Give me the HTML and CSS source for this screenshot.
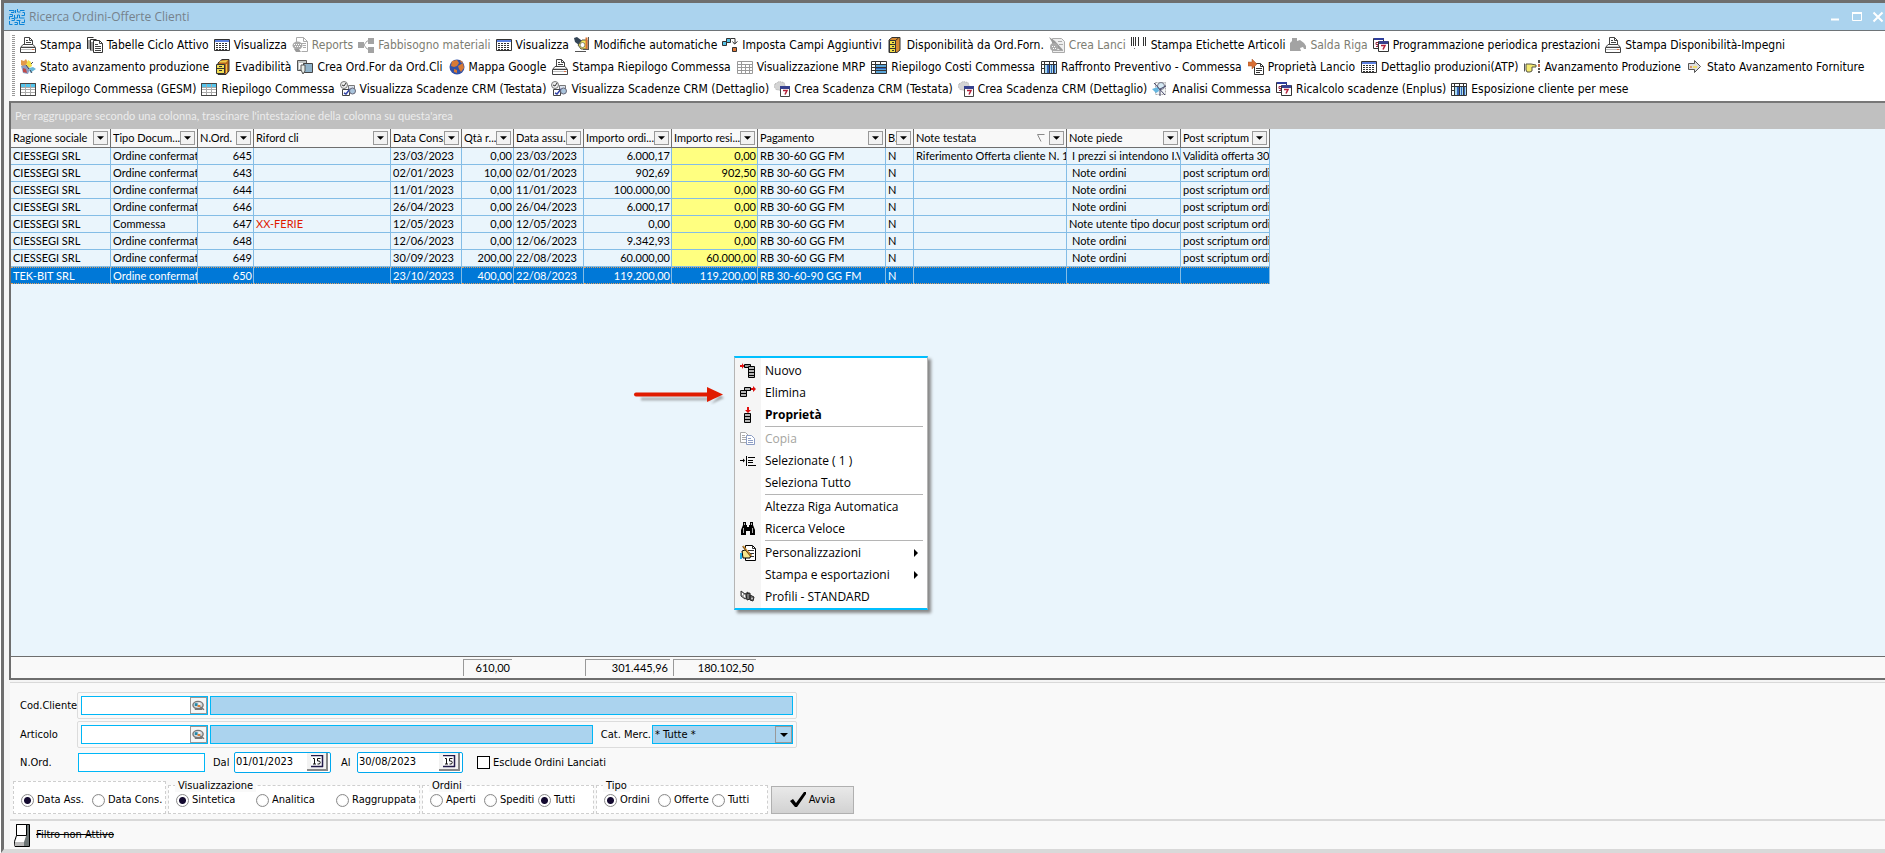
FILE: index.html
```html
<!DOCTYPE html>
<html lang="it">
<head>
<meta charset="utf-8">
<title>Ricerca Ordini-Offerte Clienti</title>
<link rel="stylesheet" href="styles.css">
</head>
<body>
<svg class="defs" aria-hidden="true">
  <symbol id="printer" viewBox="0 0 16 16">
    <path d="M4.500 7V.5h5l3 3V7" fill="#fff" stroke="#444"/><path d="M9.500.5v3h3M6 3.500h2M6 5.500h5" fill="none" stroke="#444"/>
    <path d="M3 7.500h10l2.500 3v5H.5v-5z" fill="#fff" stroke="#444"/><path d="M1 10.500h14" stroke="#444"/><path d="M1 12.500h14" stroke="#bbb"/><path d="M2 9.500h12" stroke="#ccc"/><path d="M12 12h2v1h-2z" fill="#e06a3c"/>
  </symbol>
  <symbol id="docs" viewBox="0 0 16 16">
    <path d="M.5 12V.5h6M3.500 13.500v-11h6" fill="none" stroke="#333"/><path d="M6.500 15.500v-12h6l3 3v9z" fill="#fff" stroke="#333"/><path d="M12.500 3.500v3h3M8 7.500h3M8 9.500h6M8 11.500h6M8 13.500h6M2 3v9M5 5v9" fill="none" stroke="#444"/>
  </symbol>
  <symbol id="list" viewBox="0 0 16 16">
    <path d="M.5 2.500h15v11H.5z" fill="#fff" stroke="#333"/><path d="M1 3h14v2H1z" fill="#5b7fe0"/><path d="M2 6.500h12M2 8.500h12M2 10.500h12M2 12.500h12" stroke="#333" stroke-dasharray="2 1"/>
  </symbol>
  <symbol id="reports" viewBox="0 0 16 16">
    <path d="M4.500 5V.5h7l4 4v10h-6" fill="#fff" stroke="#aaa"/><path d="M11.500.5v4h4M9 6.500h5M11 8.500h3M11 10.500h3" fill="none" stroke="#aaa"/><ellipse cx="5.500" cy="8.500" rx="5" ry="4" fill="#aaa"/><path d="M2 12h5l2 3H4z" fill="#999"/><path d="M2 7.500h7M3 9.500h6" stroke="#fff" stroke-dasharray="1 1"/>
  </symbol>
  <symbol id="tree" viewBox="0 0 16 16">
    <path d="M0 5h6v6H0zM10 1h6v6h-6zM10 10h6v6h-6z" fill="#a3a3a3"/><path d="M11 4H9L6 8l3 4h2" fill="none" stroke="#a3a3a3"/>
  </symbol>
  <symbol id="autoedit" viewBox="0 0 16 16">
    <path d="M0 1l3-1 4 3v4L5 8 1 5z" fill="#345"/><path d="M4 8l4-5h5v9H7z" fill="#f6ea5a" stroke="#554"/><circle cx="8.500" cy="8" r="2.500" fill="#fff" stroke="#886"/><path d="M12.500.5v12" stroke="#d8702c" stroke-width="2"/><path d="M14.500 0v12M9 12.500h6M1 14.500h11" stroke="#555"/>
  </symbol>
  <symbol id="fields" viewBox="0 0 16 16">
    <path d="M4.500 1.500h4v4h-4zM.5 4.500h4v4h-4z" fill="#57c4e8" stroke="#333"/><path d="M9 1.500h4V7M10.500 4.500l2 2.500 3-2.500" fill="none" stroke="#333"/><path d="M10.500 10.500h4v4h-4z" fill="#e07838" stroke="#333"/>
  </symbol>
  <symbol id="cabinet" viewBox="0 0 16 16">
    <path d="M2 3l3-2.500h8V13l-3 2.500H2z" fill="#d88b32" stroke="#333"/><path d="M2.500 3.500h6v12h-6z" fill="#f3df45" stroke="#333"/><path d="M3 7.500h5M3 11.500h5M5 5.500h2M5 9.500h2M5 13.500h2" stroke="#333"/><path d="M8.500 3.500l3-2.500" stroke="#333"/>
  </symbol>
  <symbol id="launch" viewBox="0 0 16 16">
    <path d="M3.500 1.500h9l3 3v11h-12z" fill="#eee" stroke="#aaa"/><path d="M0 0l6 4 8 9-2 1-8-7z" fill="#999"/><circle cx="5" cy="10" r="4" fill="#aaa"/><path d="M9 4.500h4M10 7.500h4M6 13.500h8" stroke="#aaa"/><path d="M3 9.500h4M4 11.500h3" stroke="#fff" stroke-dasharray="1 1"/>
  </symbol>
  <symbol id="barcode" viewBox="0 0 16 16">
    <path d="M.5 0v9M2.500 0v9M4.500 0v9M7.500 0v9M12.500 0v9M14.500 0v9" stroke="#333"/><path d="M3 11h1v1H3z" fill="#777"/>
  </symbol>
  <symbol id="settle" viewBox="0 0 16 16">
    <path d="M0 14V6l2-2V1h5v3l3-1 4 3 2 3v3h-2l-1-2-3 1 1 3z" fill="#a3a3a3"/>
  </symbol>
  <symbol id="calendars" viewBox="0 0 16 16">
    <path d="M.5 1.500h10v10H.5z" fill="#fff" stroke="#333"/><path d="M1 1h10v2H1z" fill="#2f3e9c"/><path d="M5 5.500H3v2h2v2H3" fill="none" stroke="#98243c"/><path d="M5.500 4.500h10v10h-10z" fill="#fff" stroke="#333"/><path d="M6 4h9v3H6z" fill="#39418f"/><path d="M8 8.500h4l-2 4" fill="none" stroke="#b3203a" stroke-width="1.500"/>
  </symbol>
  <symbol id="gears" viewBox="0 0 16 16">
    <path d="M1 1l3 1 2-2 2 4-4 4-3-2z" fill="#e39a4b"/><path d="M8 1l3 2 1 4-3 2-3-3z" fill="#f3df45"/><path d="M1 7l5-1 4 4-2 5-5-1z" fill="#8d9fc4"/><path d="M3 9l3 1 1 4-4-1z" fill="#c04a4a"/><path d="M9 9l4-1 3 2-3 2-3 2z" fill="#6ab8d8"/><path d="M11 5l2-2M10 11l2 3M6 6l3 4" stroke="#445"/>
  </symbol>
  <symbol id="box" viewBox="0 0 16 16">
    <path d="M3 4l4-3.500h7V12l-3 3.500H3z" fill="#b8651f" stroke="#333"/><path d="M5 2l8-1-2 2.500H4z" fill="#f0cf4a"/><path d="M1.500 5.500h8v9h-8z" fill="#f3df55" stroke="#333"/><path d="M2 9.500h7M4 7.500h3M4 11.500h3" stroke="#333"/><path d="M11.500 5v9" stroke="#f0cf4a"/>
  </symbol>
  <symbol id="orders" viewBox="0 0 16 16">
    <path d="M.5 1.500h9v10h-9z" fill="#bfc4c4" stroke="#555"/><path d="M2 4h4v6H2z" fill="#fff"/><path d="M6.500 4.500h9v9h-9z" fill="#8fb2c9" stroke="#444"/><path d="M4 6h4v6l-2 3-2-4z" fill="#e8ede8" stroke="#555"/>
  </symbol>
  <symbol id="globe" viewBox="0 0 16 16">
    <circle cx="8" cy="8" r="7.500" fill="#3252a8"/><path d="M3 2l5-1 2 3-2 3-3 1-3-1zM9 7l5-3 1 5-3 4-2-3zM5 10l3 1v3l-3-1zM11 1l3 2-2 1z" fill="#d87a34"/>
  </symbol>
  <symbol id="mrp" viewBox="0 0 16 16">
    <path d="M.5 2.500h15v12H.5zM1 5.500h14M1 8.500h14M1 11.500h14M4.500 3v11M8.500 5v9M12.500 5v9" fill="#fff" stroke="#999"/>
  </symbol>
  <symbol id="rows" viewBox="0 0 16 16">
    <path d="M.5 2.500h15v12H.5z" fill="#fff" stroke="#333"/><path d="M5 6h10v8H5z" fill="#59a5d8"/><path d="M1 5.500h14M1 8.500h14M1 11.500h14M4.500 3v11M9.500 3v2" stroke="#333"/><path d="M5 9.500h10" stroke="#2f5fc0"/>
  </symbol>
  <symbol id="cols" viewBox="0 0 16 16">
    <path d="M.5 2.500h15v12H.5z" fill="#fff" stroke="#333"/><path d="M4 6h11v8H4z" fill="#a7dcf2"/><path d="M6 6h2v8H6zM10 6h1v8h-1zM13 6h1v8h-1z" fill="#3764b8"/><path d="M1 5.500h14M3.500 3v11M8.500 3v11M12.500 3v11M1 9.500h3" stroke="#333"/>
  </symbol>
  <symbol id="launchprop" viewBox="0 0 16 16">
    <path d="M6.500 4.500h6l3 3v8h-9z" fill="#fff" stroke="#333"/><path d="M8 9.500h6M8 11.500h6M8 13.500h4M12.500 4.500v3h3" fill="none" stroke="#333"/><path d="M0 3h4V0l5 5-5 5V7H0z" fill="#d86f35" stroke="#a5552a" stroke-width=".5"/>
  </symbol>
  <symbol id="hand" viewBox="0 0 16 16">
    <path d="M.5 4.500v8" stroke="#555"/><path d="M2 5h5l5 1v2H8v4l-2 1H3L2 11z" fill="#f4ea72" stroke="#554"/><path d="M14 1h2v3h-2zM14 9h2v2h-2zM14 12h2v2h-2z" fill="#555"/><path d="M14 5h2v3h-2z" fill="#c46a4a"/>
  </symbol>
  <symbol id="arrow" viewBox="0 0 16 16">
    <path d="M1.500 4.500h6v-3l6 6-6 6v-3h-6z" fill="#ddd" stroke="#555"/><path d="M3 7h2v2H3z" fill="#e09a6a"/><path d="M6 7h4v2H6z" fill="#f2e06a"/>
  </symbol>
  <symbol id="sheet" viewBox="0 0 16 16">
    <path d="M.5 2.500h15v12H.5z" fill="#fff" stroke="#444"/><path d="M1 3h14v3H1z" fill="#54c4ec"/><path d="M5.500 3v11M10.500 3v11M1 6.500h14M1 8.500h14M1 11.500h14" stroke="#aaa"/><path d="M.5 2.500h15v12H.5z" fill="none" stroke="#444"/>
  </symbol>
  <symbol id="crmview" viewBox="0 0 16 16">
    <circle cx="4" cy="4" r="3.500" fill="#eee" stroke="#777"/><path d="M2 4l2 1 2-3" fill="none" stroke="#333"/><path d="M8.500 4.500h6v5h-6z" fill="#dde4ee" stroke="#777"/><path d="M2.500 8.500h7v6h-7z" fill="#fff" stroke="#444"/><path d="M4 12l2 1 4-5" fill="none" stroke="#3344a8" stroke-width="1.500"/><circle cx="12.500" cy="10" r="3" fill="#a9c4dc" stroke="#667"/>
  </symbol>
  <symbol id="crmnew" viewBox="0 0 16 16">
    <path d="M1 3l4-2.500 5 1 1 3-4 5-5-1-2-3z" fill="#d4d4d4" stroke="#aaa" stroke-dasharray="1 1"/><path d="M6.500 5.500h9v10h-9z" fill="#fff" stroke="#444"/><path d="M6 5h10v3H6z" fill="#36418f"/><path d="M9 9.500h4l-2 4" fill="none" stroke="#b3203a" stroke-width="1.500"/>
  </symbol>
  <symbol id="analysis" viewBox="0 0 16 16">
    <path d="M3.500 1.500h10v12h-10z" fill="#f2f5f7" stroke="#aaa" stroke-dasharray="2 1"/><circle cx="9" cy="5" r="3.500" fill="#d5eaf4" stroke="#778"/><path d="M0 8l6-2 1 4-3 2z" fill="#67b7e0"/><path d="M2 2l11 12M8 8l6-3M8 8v7" stroke="#446"/>
  </symbol>
  <symbol id="m-new" viewBox="0 0 16 16">
    <path d="M0 2h4v2H0zM2 0l2 3-2 3z" fill="#e01010"/><path d="M4.500 1.500h6v3h-6z" fill="#999" stroke="#000"/><path d="M8.500 3.500h6v11h-6z" fill="#b5b5b5" stroke="#000"/><path d="M9 6.500h5M9 9.500h5M9 12.500h5" stroke="#000"/>
  </symbol>
  <symbol id="m-del" viewBox="0 0 16 16">
    <path d="M4.500 2.500h6v3h-6zM.5 5.500h6v3h-6zM.5 8.500h6v3h-6z" fill="#b5b5b5" stroke="#000"/><path d="M11 3h3v2h-3zM13 1l3 3-3 3z" fill="#e01010"/>
  </symbol>
  <symbol id="m-prop" viewBox="0 0 16 16">
    <path d="M7 0h2v3h2L8 6 5 3h2z" fill="#e01010"/><path d="M4.500 6.500h6v9h-6z" fill="#b5b5b5" stroke="#000"/><path d="M5 9.500h6M5 12.500h6" stroke="#000"/>
  </symbol>
  <symbol id="m-copy" viewBox="0 0 16 16">
    <path d="M.5 1.500h5l3 3v7h-8z" fill="#fff" stroke="#aaa"/><path d="M2 4.500h3M2 6.500h4M2 8.500h4" stroke="#aaa"/><path d="M6.500 4.500h5l3 3v6h-8z" fill="#fff" stroke="#8c9dc4"/><path d="M8 7.500h3M8 9.500h5M8 11.500h5" stroke="#8c9dc4"/>
  </symbol>
  <symbol id="m-sel" viewBox="0 0 16 16">
    <path d="M0 7.500h4M6.500 3v10M8 4.500h7M8 7.500h5M8 9.500h5M8 12.500h8" stroke="#000" fill="none"/><path d="M3 5.500l2 2-2 2z"/>
  </symbol>
  <symbol id="m-find" viewBox="0 0 16 16">
    <path d="M3 1h3v3h1v2h2V4h1V1h3v3l2 5v5h-5v-4H6v4H1V9l2-5z"/><path d="M3.500 7v5M12.500 7v5M4.500 2v2M11.500 2v2" stroke="#fff" stroke-width=".7"/>
  </symbol>
  <symbol id="m-pers" viewBox="0 0 16 16">
    <path d="M5.500.5h7l3 3v12h-10z" fill="#fff" stroke="#000"/><path d="M12.500.5v3h3M8 5.500h6M11 8.500h3M11 11.500h3" fill="none" stroke="#333"/><path d="M2 6l3-1 6 4-1 4H3z" fill="#f7e78c" stroke="#000"/><path d="M0 8h2v6H0z" fill="#20b0e8"/><path d="M3 1l8 10" stroke="#c88a2a" stroke-width="2"/><path d="M2.500 1.500L11 12" stroke="#000" stroke-width=".5"/>
  </symbol>
  <symbol id="m-prof" viewBox="0 0 16 16">
    <path d="M1 2l4 3 3-2v5l-3 2-4-3z" fill="#aaa" stroke="#333"/><path d="M6 5l4-1v6l-3 1zM10 6l4 2-1 4-3-1z" fill="#777" stroke="#222"/><path d="M2.500 4v2M4.500 6v2M12 9v1" stroke="#fff"/>
  </symbol>
  <symbol id="lens" viewBox="0 0 14 12">
    <ellipse cx="6.500" cy="5" rx="5.500" ry="4" fill="#d5dade" stroke="#777" stroke-width="1.500"/><path d="M3 9.500h8M9 7l4 3" stroke="#777" stroke-width="1.500"/><path d="M3 3h3v3H3z" fill="#28a"/><path d="M6 5h3v2H6z" fill="#d97a2a"/><path d="M7 2.500h2v2H7z" fill="#fff"/>
  </symbol>
  <symbol id="cal15" viewBox="0 0 14 13">
    <path d="M1 1h11v10H1z" fill="#fff"/><path d="M1 .5h12M12.500 0v12M1 11.500h12" stroke="#221a4a" stroke-width="1.500" fill="none"/><path d="M3 3.500h1.500V9M3 9h3M10.500 3.500H7.500V6h2q1.500 1.500 0 3h-2" fill="none" stroke="#111"/>
  </symbol>
  <symbol id="down" viewBox="0 0 8 4"><path d="M0 0h8L4 4z"/></symbol>
</svg>

<div class="window">
  <header class="titlebar">
    <svg class="logo" viewBox="0 0 16 16"><path d="M0 1.500h5v2H2M8.500 0v3h3M6.500 1v3M11 1.500h4.500M13.500 3.500h2v3h-3M.5 5.500h3v2h-3v3M5.500 6v3h3V6h2v3h5M2.500 9.500h3v2h-3M.5 12v3.500h3M5.500 13.500h3v2h-3M7.500 11.500h4M10.500 12v3.500h5M12.500 13.500h3v-3" fill="none" stroke="#0a84d8"/></svg>
    <h1 class="title">Ricerca Ordini-Offerte Clienti</h1>
    <div class="winbtns">
      <button type="button" aria-label="Riduci"><svg viewBox="0 0 12 12"><path d="M1 8.500h8" stroke="#fff" stroke-width="2"/></svg></button>
      <button type="button" aria-label="Ingrandisci"><svg viewBox="0 0 12 12"><path d="M1.500 1.500h9v8h-9z" fill="none" stroke="#fff"/><path d="M1 2h10" stroke="#fff" stroke-width="2"/></svg></button>
      <button type="button" aria-label="Chiudi"><svg viewBox="0 0 12 12"><path d="M1.500 1.500l9 9M10.500 1.500l-9 9" stroke="#fff" stroke-width="2"/></svg></button>
    </div>
  </header>

  <nav class="toolbar">
    <span class="grip"></span>
    <div class="toolrows">
      <div class="toolrow">
        <button type="button"><svg><use href="#printer"/></svg>Stampa</button>
        <button type="button"><svg><use href="#docs"/></svg>Tabelle Ciclo Attivo</button>
        <button type="button"><svg><use href="#list"/></svg>Visualizza</button>
        <button type="button" disabled><svg><use href="#reports"/></svg>Reports</button>
        <button type="button" disabled><svg><use href="#tree"/></svg>Fabbisogno materiali</button>
        <button type="button"><svg><use href="#list"/></svg>Visualizza</button>
        <button type="button"><svg><use href="#autoedit"/></svg>Modifiche automatiche</button>
        <button type="button"><svg><use href="#fields"/></svg>Imposta Campi Aggiuntivi</button>
        <button type="button"><svg><use href="#cabinet"/></svg>Disponibilità da Ord.Forn.</button>
        <button type="button" disabled><svg><use href="#launch"/></svg>Crea Lanci</button>
        <button type="button"><svg><use href="#barcode"/></svg>Stampa Etichette Articoli</button>
        <button type="button" disabled><svg><use href="#settle"/></svg>Salda Riga</button>
        <button type="button"><svg><use href="#calendars"/></svg>Programmazione periodica prestazioni</button>
        <button type="button"><svg><use href="#printer"/></svg>Stampa Disponibilità-Impegni</button>
      </div>
      <div class="toolrow loose">
        <button type="button"><svg><use href="#gears"/></svg>Stato avanzamento produzione</button>
        <button type="button"><svg><use href="#box"/></svg>Evadibilità</button>
        <button type="button"><svg><use href="#orders"/></svg>Crea Ord.For da Ord.Cli</button>
        <button type="button"><svg><use href="#globe"/></svg>Mappa Google</button>
        <button type="button"><svg><use href="#printer"/></svg>Stampa Riepilogo Commessa</button>
        <button type="button"><svg><use href="#mrp"/></svg>Visualizzazione MRP</button>
        <button type="button"><svg><use href="#rows"/></svg>Riepilogo Costi Commessa</button>
        <button type="button"><svg><use href="#cols"/></svg>Raffronto Preventivo - Commessa</button>
        <button type="button"><svg><use href="#launchprop"/></svg>Proprietà Lancio</button>
        <button type="button"><svg><use href="#list"/></svg>Dettaglio produzioni(ATP)</button>
        <button type="button"><svg><use href="#hand"/></svg>Avanzamento Produzione</button>
        <button type="button"><svg><use href="#arrow"/></svg>Stato Avanzamento Forniture</button>
      </div>
      <div class="toolrow">
        <button type="button"><svg><use href="#sheet"/></svg>Riepilogo Commessa (GESM)</button>
        <button type="button"><svg><use href="#sheet"/></svg>Riepilogo Commessa</button>
        <button type="button"><svg><use href="#crmview"/></svg>Visualizza Scadenze CRM (Testata)</button>
        <button type="button"><svg><use href="#crmview"/></svg>Visualizza Scadenze CRM (Dettaglio)</button>
        <button type="button"><svg><use href="#crmnew"/></svg>Crea Scadenza CRM (Testata)</button>
        <button type="button"><svg><use href="#crmnew"/></svg>Crea Scadenza CRM (Dettaglio)</button>
        <button type="button"><svg><use href="#analysis"/></svg>Analisi Commessa</button>
        <button type="button"><svg><use href="#calendars"/></svg>Ricalcolo scadenze (Enplus)</button>
        <button type="button"><svg><use href="#cols"/></svg>Esposizione cliente per mese</button>
      </div>
    </div>
  </nav>

  <main class="grid">
    <div class="groupbar">Per raggruppare secondo una colonna, trascinare l'intestazione della colonna su questa'area</div>
    <div class="gridbody">
      <table class="orders">
        <colgroup><col class="w100"><col class="w87"><col class="w56"><col class="w137"><col class="w71"><col class="w52"><col class="w70"><col class="w88"><col class="w86"><col class="w128"><col class="w28"><col class="w153"><col class="w114"><col class="w89"></colgroup>
        <thead><tr>
          <th><div><span>Ragione sociale</span><button type="button" aria-label="Filtra"><svg><use href="#down"/></svg></button></div></th>
          <th><div><span>Tipo Docum...</span><button type="button" aria-label="Filtra"><svg><use href="#down"/></svg></button></div></th>
          <th><div><span>N.Ord.</span><button type="button" aria-label="Filtra"><svg><use href="#down"/></svg></button></div></th>
          <th><div><span>Riford cli</span><button type="button" aria-label="Filtra"><svg><use href="#down"/></svg></button></div></th>
          <th><div><span>Data Cons.</span><button type="button" aria-label="Filtra"><svg><use href="#down"/></svg></button></div></th>
          <th><div><span>Qtà r...</span><button type="button" aria-label="Filtra"><svg><use href="#down"/></svg></button></div></th>
          <th><div><span>Data assu...</span><button type="button" aria-label="Filtra"><svg><use href="#down"/></svg></button></div></th>
          <th><div><span>Importo ordi...</span><button type="button" aria-label="Filtra"><svg><use href="#down"/></svg></button></div></th>
          <th><div><span>Importo resi...</span><button type="button" aria-label="Filtra"><svg><use href="#down"/></svg></button></div></th>
          <th><div><span>Pagamento</span><button type="button" aria-label="Filtra"><svg><use href="#down"/></svg></button></div></th>
          <th><div><span>B.</span><button type="button" aria-label="Filtra"><svg><use href="#down"/></svg></button></div></th>
          <th><div><span>Note testata</span><svg class="sort" viewBox="0 0 8 8"><path d="M7.500.5h-7L4 7.500" fill="none" stroke="#888"/></svg><button type="button" aria-label="Filtra"><svg><use href="#down"/></svg></button></div></th>
          <th><div><span>Note piede</span><button type="button" aria-label="Filtra"><svg><use href="#down"/></svg></button></div></th>
          <th><div><span>Post scriptum ...</span><button type="button" aria-label="Filtra"><svg><use href="#down"/></svg></button></div></th>
        </tr></thead>
        <tbody>
          <tr><td>CIESSEGI SRL</td><td>Ordine confermato</td><td class="num">645</td><td></td><td>23/03/2023</td><td class="num">0,00</td><td>23/03/2023</td><td class="num">6.000,17</td><td class="num due">0,00</td><td>RB 30-60 GG FM</td><td>N</td><td>Riferimento Offerta cliente N. 137</td><td class="ind">I prezzi si intendono I.V.A.</td><td>Validità offerta 30 giorni</td></tr>
          <tr><td>CIESSEGI SRL</td><td>Ordine confermato</td><td class="num">643</td><td></td><td>02/01/2023</td><td class="num">10,00</td><td>02/01/2023</td><td class="num">902,69</td><td class="num due">902,50</td><td>RB 30-60 GG FM</td><td>N</td><td></td><td class="ind">Note ordini</td><td>post scriptum ordini</td></tr>
          <tr><td>CIESSEGI SRL</td><td>Ordine confermato</td><td class="num">644</td><td></td><td>11/01/2023</td><td class="num">0,00</td><td>11/01/2023</td><td class="num">100.000,00</td><td class="num due">0,00</td><td>RB 30-60 GG FM</td><td>N</td><td></td><td class="ind">Note ordini</td><td>post scriptum ordini</td></tr>
          <tr><td>CIESSEGI SRL</td><td>Ordine confermato</td><td class="num">646</td><td></td><td>26/04/2023</td><td class="num">0,00</td><td>26/04/2023</td><td class="num">6.000,17</td><td class="num due">0,00</td><td>RB 30-60 GG FM</td><td>N</td><td></td><td class="ind">Note ordini</td><td>post scriptum ordini</td></tr>
          <tr><td>CIESSEGI SRL</td><td>Commessa</td><td class="num">647</td><td class="alert">XX-FERIE</td><td>12/05/2023</td><td class="num">0,00</td><td>12/05/2023</td><td class="num">0,00</td><td class="num due">0,00</td><td>RB 30-60 GG FM</td><td>N</td><td></td><td>Note utente tipo documento</td><td>post scriptum ordini</td></tr>
          <tr><td>CIESSEGI SRL</td><td>Ordine confermato</td><td class="num">648</td><td></td><td>12/06/2023</td><td class="num">0,00</td><td>12/06/2023</td><td class="num">9.342,93</td><td class="num due">0,00</td><td>RB 30-60 GG FM</td><td>N</td><td></td><td class="ind">Note ordini</td><td>post scriptum ordini</td></tr>
          <tr><td>CIESSEGI SRL</td><td>Ordine confermato</td><td class="num">649</td><td></td><td>30/09/2023</td><td class="num">200,00</td><td>22/08/2023</td><td class="num">60.000,00</td><td class="num due">60.000,00</td><td>RB 30-60 GG FM</td><td>N</td><td></td><td class="ind">Note ordini</td><td>post scriptum ordini</td></tr>
          <tr class="selected"><td>TEK-BIT SRL</td><td>Ordine confermato</td><td class="num">650</td><td></td><td>23/10/2023</td><td class="num">400,00</td><td>22/08/2023</td><td class="num">119.200,00</td><td class="num">119.200,00</td><td>RB 30-60-90 GG FM</td><td>N</td><td></td><td></td><td></td></tr>
        </tbody>
      </table>
    </div>
    <div class="totals">
      <output class="total qty">610,00</output>
      <output class="total amount">301.445,96</output>
      <output class="total rest">180.102,50</output>
    </div>
  </main>

  <form class="filters">
    <div class="frow">
      <label for="cli">Cod.Cliente</label>
      <div class="fbox">
        <div class="lookup"><input id="cli" type="text"><button type="button" aria-label="Cerca cliente"><svg><use href="#lens"/></svg></button></div>
        <input class="desc wide" type="text" readonly aria-label="Descrizione cliente">
      </div>
    </div>
    <div class="frow">
      <label for="art">Articolo</label>
      <div class="fbox">
        <div class="lookup"><input id="art" type="text"><button type="button" aria-label="Cerca articolo"><svg><use href="#lens"/></svg></button></div>
        <input class="desc" type="text" readonly aria-label="Descrizione articolo">
        <label class="cat" for="cat">Cat. Merc.</label>
        <div class="combo"><select id="cat"><option>* Tutte *</option></select><span class="comboarrow"><svg><use href="#down"/></svg></span></div>
      </div>
    </div>
    <div class="frow dates">
      <label for="nord">N.Ord.</label>
      <input class="nord" id="nord" type="text">
      <label class="dal" for="dal">Dal</label>
      <div class="date"><input id="dal" type="text" value="01/01/2023"><button type="button" aria-label="Calendario"><svg><use href="#cal15"/></svg></button></div>
      <label class="al" for="al">Al</label>
      <div class="date long"><input id="al" type="text" value="30/08/2023"><button type="button" aria-label="Calendario"><svg><use href="#cal15"/></svg></button></div>
      <label class="check"><input type="checkbox">Esclude Ordini Lanciati</label>
    </div>
    <div class="options">
      <div class="opt data" role="group" aria-label="Data">
        <label class="g71"><input type="radio" name="data" checked>Data Ass.</label>
        <label><input type="radio" name="data">Data Cons.</label>
      </div>
      <div class="opt vis" role="group" aria-labelledby="l-vis">
        <span class="legend" id="l-vis">Visualizzazione</span>
        <label class="g80"><input type="radio" name="vis" checked>Sintetica</label>
        <label class="g80"><input type="radio" name="vis">Analitica</label>
        <label><input type="radio" name="vis">Raggruppata</label>
      </div>
      <div class="opt ord" role="group" aria-labelledby="l-ord">
        <span class="legend" id="l-ord">Ordini</span>
        <label class="g54"><input type="radio" name="ord">Aperti</label>
        <label class="g54"><input type="radio" name="ord">Spediti</label>
        <label><input type="radio" name="ord" checked>Tutti</label>
      </div>
      <div class="opt ord" role="group" aria-labelledby="l-tipo">
        <span class="legend" id="l-tipo">Tipo</span>
        <label class="g54"><input type="radio" name="tipo" checked>Ordini</label>
        <label class="g54"><input type="radio" name="tipo">Offerte</label>
        <label><input type="radio" name="tipo">Tutti</label>
      </div>
      <button class="go" type="button"><svg viewBox="0 0 16 16"><path d="M0 9l3-2 3 4 8-11h2v2L7 15H5z"/></svg>Avvia</button>
    </div>
  </form>

  <footer class="status">
    <svg class="switch" viewBox="0 0 16 23"><path d="M2.500.5h13v22H1l-.5-5 2-6z" fill="#6d7575" stroke="#000"/><path d="M2.500.5h10v11h-10z" fill="#fff" stroke="#000"/><path d="M3 12h9l-2 6H1z" fill="#fff"/><path d="M1 18h9v4H1z" fill="#bbb"/></svg>
    <s>Filtro non Attivo</s>
  </footer>

  <svg class="pointer" viewBox="0 0 100 28">
    <defs><filter id="soft"><feGaussianBlur stdDeviation="1.200"/></filter></defs>
    <g filter="url(#soft)" fill="none" opacity=".55"><path d="M8 13h70" stroke="#777" stroke-width="3"/><path d="M78 18l13-6-4-3z" fill="#666"/></g>
    <path d="M3 8.500h72" stroke="#e01b00" stroke-width="4" stroke-linecap="round"/><path d="M74 1v15l16-7.500z" fill="#e01b00"/>
  </svg>

  <div class="menu" role="menu">
    <button type="button" role="menuitem"><svg><use href="#m-new"/></svg>Nuovo</button>
    <button type="button" role="menuitem"><svg><use href="#m-del"/></svg>Elimina</button>
    <button type="button" role="menuitem" class="strong"><svg><use href="#m-prop"/></svg>Proprietà</button>
    <hr>
    <button type="button" role="menuitem" disabled><svg><use href="#m-copy"/></svg>Copia</button>
    <button type="button" role="menuitem"><svg><use href="#m-sel"/></svg>Selezionate ( 1 )</button>
    <button type="button" role="menuitem"><svg></svg>Seleziona Tutto</button>
    <hr>
    <button type="button" role="menuitem"><svg></svg>Altezza Riga Automatica</button>
    <button type="button" role="menuitem"><svg><use href="#m-find"/></svg>Ricerca Veloce</button>
    <hr>
    <button type="button" role="menuitem" class="sub"><svg><use href="#m-pers"/></svg>Personalizzazioni</button>
    <button type="button" role="menuitem" class="sub"><svg></svg>Stampa e esportazioni</button>
    <button type="button" role="menuitem"><svg><use href="#m-prof"/></svg>Profili - STANDARD</button>
  </div>
</div>
</body>
</html>
```
FILE: styles.css
```css
* { box-sizing: border-box; }
html, body { height: 100%; }
body {
  margin: 0;
  overflow: hidden;
  background: #fff;
  color: #000;
  font: 12px/16px "DejaVu Sans Condensed", "Noto Sans", sans-serif;
}
button, input, select { font: inherit; color: inherit; margin: 0; padding: 0; border: 0; background: none; border-radius: 0; }
button { display: inline-flex; align-items: center; white-space: nowrap; }
svg { display: block; flex: none; }
.defs { position: absolute; width: 0; height: 0; }

.window {
  position: relative;
  display: flex;
  flex-direction: column;
  height: 100%;
  margin-left: 1px;
  border-top: 3px solid #6e6e6e;
  border-left: 3px solid #6e6e6e;
  border-bottom: 4px solid #d9d9d9;
  background: #f5f5f5;
}

.titlebar {
  display: flex;
  align-items: center;
  height: 28px;
  padding: 0 1px 0 5px;
  background: #abd3ee;
  border-bottom: 1px solid #6e7478;
  flex: none;
}
.logo { width: 16px; height: 16px; }
.title { flex: 1; margin: 0 0 0 4px; font: 12px/16px "Open Sans", sans-serif; color: #76828c; }
.winbtns { display: flex; gap: 9px; }
.winbtns svg { width: 12px; height: 12px; }

.toolbar { display: flex; height: 70px; margin-left: 6px; padding: 3px 0 0 2px; background: #fff; flex: none; overflow: hidden; }
.grip { width: 3px; height: 62px; margin-top: 1px; background: repeating-linear-gradient(#999 0 1px, #fff 1px 2px); }
.toolrows { margin-left: 5px; }
.toolrow { display: flex; height: 22px; gap: 5px; }
.toolrow.loose { gap: 6px; }
.toolrow svg { width: 16px; height: 16px; margin-right: 4px; }
.toolrow button:disabled { color: #7d7d72; }

.grid {
  display: flex;
  flex-direction: column;
  flex: 1;
  min-height: 0;
  margin-left: 5px;
  border: 2px solid #6e6e6e;
  border-top-color: #777;
  border-right: 0;
  background: #eaf5fc;
  font: 11px/14px Lato, "Open Sans", sans-serif;
}
.groupbar { height: 26px; padding: 6px 4px; background: #c0c0c0; color: #ececec; white-space: nowrap; flex: none; }
.gridbody { flex: 1; min-height: 0; overflow: hidden; }
.orders { table-layout: fixed; width: 1259px; border-collapse: separate; border-spacing: 0; }
.w100 { width: 100px; } .w87 { width: 87px; } .w56 { width: 56px; } .w137 { width: 137px; }
.w71 { width: 71px; } .w52 { width: 52px; } .w70 { width: 70px; } .w88 { width: 88px; }
.w86 { width: 86px; } .w128 { width: 128px; } .w28 { width: 28px; } .w153 { width: 153px; }
.w114 { width: 114px; } .w89 { width: 89px; }
.orders th {
  height: 19px;
  padding: 0 2px;
  font-weight: 400;
  text-align: left;
  background: #f8f8f8;
  border-right: 1px solid #6e6e6e;
  border-bottom: 1px solid #6e6e6e;
}
.orders th div { display: flex; align-items: center; height: 18px; }
.orders th span { flex: 1; min-width: 0; overflow: hidden; white-space: nowrap; }
.orders th button { justify-content: center; width: 15px; height: 14px; border: 1px solid #999; background: #f2f2f2; flex: none; }
.orders th button svg { width: 7px; height: 4px; }
.orders th .sort { width: 8px; height: 8px; margin-right: 4px; }
.orders td {
  height: 17px;
  padding: 0 1px 0 2px;
  line-height: 16px;
  white-space: nowrap;
  overflow: hidden;
  border-right: 1px solid #84bde6;
  border-bottom: 1px solid #84bde6;
}
.orders .num { text-align: right; }
.orders .due { background: #ffff80; }
.orders .ind { padding-left: 5px; }
.orders .alert { color: #e01b00; }
.orders .selected td { background: #0078d7; color: #fff; border-bottom: 1px dotted #e0a060; border-top: 1px dotted #e0a060; line-height: 14px; }

.totals { display: flex; height: 22px; padding: 2px 0 2px 452px; background: #f9f9f9; border-top: 1px solid #6e6e6e; flex: none; }
.total { height: 17px; padding: 1px 2px 0 0; text-align: right; border-top: 1px solid #999; border-left: 1px solid #999; }
.qty { width: 49px; margin-right: 73px; }
.amount { width: 85px; margin-right: 3px; }
.rest { width: 83px; }

.filters {
  height: 137px;
  margin: 2px 0 0 6px;
  padding: 9px 0 0 10px;
  background: #f9f9f9;
  border-top: 1px solid #d9d9d9;
  flex: none;
  font-size: 11px;
}
.frow { display: flex; align-items: center; margin-bottom: 2px; }
.frow > label:first-child { width: 57px; white-space: nowrap; }
.fbox { display: flex; align-items: center; width: 720px; height: 27px; padding: 0 3px; border: 1px solid #dcdcdc; border-radius: 2px; }
.lookup { display: flex; width: 127px; height: 19px; margin-right: 2px; border: 1px solid #00b7f7; background: #fff; }
.lookup input { flex: 1; min-width: 0; padding: 0 2px; }
.lookup button { justify-content: center; width: 17px; border: 1px solid #999; background: #f6f6f6; }
.lookup svg { width: 13px; height: 12px; }
.desc { width: 383px; height: 19px; padding: 0 2px; background: #abd3ee; border: 1px solid #00b7f7; }
.desc.wide { flex: 1; }
.cat { flex: 1; text-align: right; padding-right: 1px; white-space: nowrap; }
.combo { position: relative; width: 141px; height: 19px; border: 1px solid #00b7f7; background: #abd3ee; }
.combo select { width: 100%; height: 17px; padding-left: 2px; appearance: none; }
.comboarrow { position: absolute; top: 0; right: 0; display: flex; align-items: center; justify-content: center; width: 17px; height: 17px; border: 1px solid #999; pointer-events: none; }
.comboarrow svg { width: 8px; height: 4px; }
.dates { height: 25px; padding-left: 0; }
.nord { width: 127px; height: 19px; margin-left: 1px; padding: 0 2px; background: #fff; border: 1px solid #00b7f7; }
.dal { width: 29px; padding-left: 8px; }
.al { width: 26px; padding-left: 10px; }
.date { display: flex; width: 97px; height: 21px; border: 1px solid #00a8ee; border-radius: 2px; background: #fff; }
.date.long { width: 106px; }
.date input { flex: 1; min-width: 0; padding: 0 1px 2px; }
.date button { justify-content: center; width: 21px; height: 18px; margin-right: 2px; background: #f2f2f2; border-right: 2px solid #888; border-bottom: 2px solid #888; }
.date svg { width: 14px; height: 13px; }
.check { display: flex; align-items: center; margin-left: 14px; }
.check input { appearance: none; width: 13px; height: 13px; margin-right: 3px; border: 1px solid #000; background: #fff; }

.options { display: flex; align-items: flex-end; gap: 2px; height: 37px; margin-left: -7px; }
.opt { position: relative; display: flex; align-items: center; height: 29px; padding: 1px 0 0 7px; background: #fff; border: 1px dashed #cfcfcf; }
.opt label { display: flex; align-items: center; white-space: nowrap; }
.opt input { appearance: none; width: 13px; height: 13px; margin-right: 3px; flex: none; border: 1px solid #8a8a8a; border-radius: 50%; background: radial-gradient(#fff 50%, #e2e2e2); }
.opt input:checked { background: radial-gradient(circle, #140a30 0 3px, #fff 4px); }
.opt.data { width: 153px; height: 33px; padding-top: 5px; }
.vis { width: 252px; }
.ord { width: 172px; }
.g71 { width: 71px; } .g80 { width: 80px; } .g54 { width: 54px; }
.legend { position: absolute; left: 6px; top: -8px; padding: 0 3px; line-height: 16px; background: #f9f9f9; height: 14px; }
.go { justify-content: center; width: 83px; height: 28px; margin-left: 1px; border: 1px solid #b0b0b0; background: linear-gradient(#e9e9e9, #d2d2d2); }
.go svg { width: 16px; height: 16px; margin-right: 3px; }

.status { display: flex; align-items: center; gap: 6px; height: 30px; margin-left: 6px; padding-left: 4px; background: #f9f9f9; border-top: 2px solid #d9d9d9; flex: none; font-size: 11px; }
.switch { width: 16px; height: 23px; }

.pointer { position: absolute; left: 629px; top: 383px; width: 100px; height: 28px; }
.menu {
  position: absolute;
  left: 730px;
  top: 353px;
  width: 194px;
  padding: 2px 0 0;
  border: 1px solid #b5b5b5;
  border-top: 2px solid #00bfff;
  border-bottom: 2px solid #00bfff;
  background: linear-gradient(90deg, #f5f5f5 26px, #fff 26px);
  box-shadow: 3px 3px 3px #888;
  font: 12px/16px "Open Sans", sans-serif;
}
.menu button { position: relative; display: flex; width: 100%; height: 22px; padding-left: 5px; }
.menu button svg { width: 16px; height: 16px; margin-right: 9px; }
.menu button:disabled { color: #a5a5a0; }
.menu .strong { font-weight: 700; }
.menu .sub::after { content: ""; margin-left: auto; margin-right: 9px; border-left: 4px solid #000; border-top: 4px solid transparent; border-bottom: 4px solid transparent; }
.menu hr { height: 1px; margin: 0 4px 1px 30px; border: 0; background: #b5b5b5; }
```
